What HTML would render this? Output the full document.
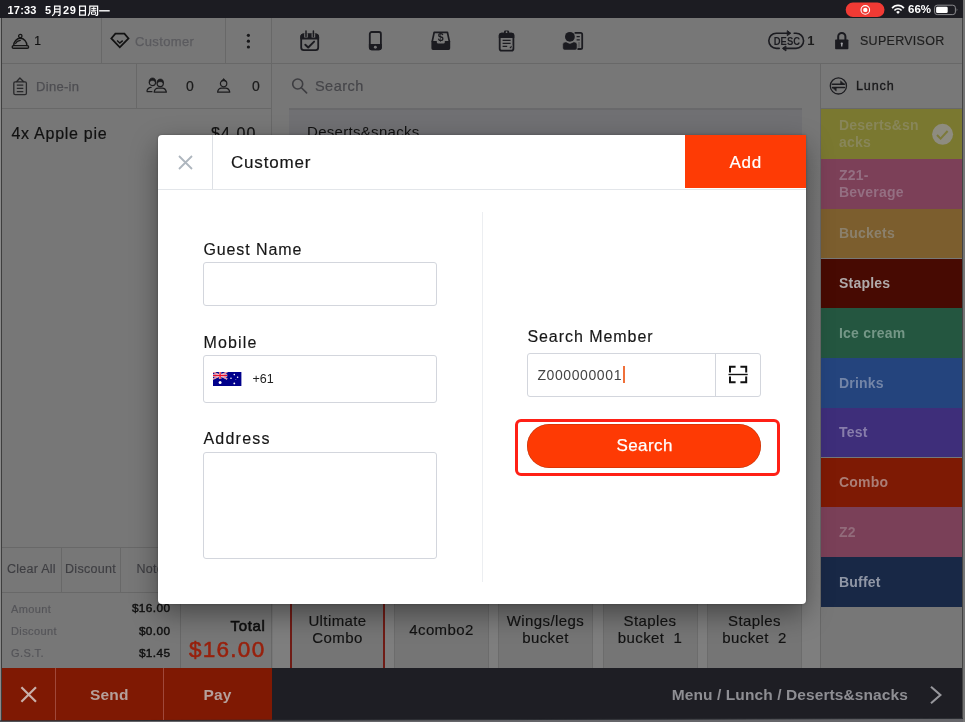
<!DOCTYPE html>
<html>
<head>
<meta charset="utf-8">
<title>POS - Customer</title>
<style>
*{box-sizing:border-box;margin:0;padding:0}
html,body{width:965px;height:722px;overflow:hidden;background:#777777;font-family:"Liberation Sans",sans-serif;}
#app{position:relative;width:965px;height:722px;overflow:hidden;background:#777777;will-change:transform;transform:translateZ(0);}
.abs{position:absolute}
.t{position:absolute;white-space:nowrap;line-height:1}
.hl{position:absolute;height:1.4px;background:#686868}
.vl{position:absolute;width:1.4px;background:#686868}
/* status bar */
#status{position:absolute;left:0;top:0;width:965px;height:18px;background:#1c1c22}
/* sidebar categories */
.cat{position:absolute;left:821px;width:141px;height:50px}
.cat .t{left:18px;font-weight:bold;font-size:14px;letter-spacing:.2px}
/* modal */
#modal{position:absolute;left:158.4px;top:135.2px;width:647.6px;height:469px;background:#fff;border-radius:4px 0 4px 4px;box-shadow:0 10px 28px -1px rgba(0,0,0,.41),0 0 2.5px rgba(0,0,0,.28)}
.lbl{position:absolute;white-space:nowrap;line-height:1;font-size:16px;color:#161616;letter-spacing:.9px;-webkit-text-stroke:.15px #161616}
.inp{position:absolute;border:1px solid #d3d6dd;border-radius:3px;background:#fff}
</style>
</head>
<body>
<div id="app">

<!-- ===== STATUS BAR ===== -->
<div id="status">
  <div class="t" style="left:7.6px;top:4.6px;font-size:11px;font-weight:bold;color:#fff;letter-spacing:.15px">17:33</div>
  <div class="t" style="left:45px;top:4.6px;font-size:11px;font-weight:bold;color:#fff">5</div>
  <div class="t" style="left:63px;top:4.6px;font-size:11px;font-weight:bold;color:#fff;letter-spacing:.7px">29</div>
  <svg class="abs" style="left:845px;top:2px" width="40" height="16"><rect x=".7" y=".6" width="38.8" height="14.4" rx="7.2" fill="#f13a34"/><circle cx="20.3" cy="7.9" r="4.3" fill="none" stroke="#fff" stroke-width="1.1"/><circle cx="20.3" cy="7.9" r="2.2" fill="#fff"/></svg>

  <svg class="abs" style="left:891px;top:4px" width="14" height="11" viewBox="0 0 14 11" fill="none" stroke="#fff" stroke-linecap="butt">
  <path d="M1.1 4.2A7.6 7.6 0 0 1 12.9 4.2" stroke-width="1.7"/><path d="M3.4 6.4A4.7 4.7 0 0 1 10.6 6.4" stroke-width="1.6"/><path d="M7 9.9L5.2 8A2.5 2.5 0 0 1 8.8 8Z" fill="#fff" stroke="none"/></svg>
  <svg class="abs" style="left:933px;top:4px" width="27" height="12" viewBox="0 0 27 12" fill="none">
  <rect x="1.6" y="1.2" width="20.8" height="9.4" rx="2.6" stroke="#8a8a8e" stroke-width="1"/><rect x="3.1" y="2.7" width="11.6" height="6.4" rx="1.3" fill="#fff"/><path d="M23.7 4.3Q25.2 5.9 23.7 7.5Z" fill="#8a8a8e"/></svg>
  <!-- CJK glyphs drawn as strokes -->
  <svg class="abs" style="left:51.2px;top:4.5px" width="60" height="12" viewBox="0 0 60 12" fill="none" stroke="#fff" stroke-width="1.25" stroke-linecap="square">
  <!-- yue -->
  <path d="M3.6 1.1H9V9.6Q9 10.6 7.6 10.4M3.6 1.1V6.4Q3.6 9.2 1.6 10.4M3.8 4H8.8M3.8 6.8H8.8"/>
  <!-- ri -->
  <path d="M28.6 1.2H34.4V10.2H28.6ZM28.8 5.6H34.2"/>
  <!-- zhou -->
  <path d="M38.8 1.2H46.6V9.6Q46.6 10.6 45.2 10.4M38.8 1.2V6.2Q38.8 9 37.4 10.4" /><path d="M40.8 3.4H44.8M42.8 2.2V5.2M40.6 5.3H45" stroke-width="1"/><path d="M41 6.9H44.6V9.3H41Z" stroke-width="1"/>
  <!-- yi -->
  <path d="M48.8 5.8H58" stroke-width="1.4"/>
  </svg>
  <div class="t" style="left:908px;top:4px;font-size:11.5px;font-weight:bold;color:#fff">66%</div>
</div>

<!-- ===== BACKGROUND APP (dimmed) ===== -->
<div class="abs" style="left:0;top:18px;width:1.1px;height:704px;background:#8a8a8a"></div><div class="abs" style="left:1.1px;top:18px;width:.9px;height:704px;background:#3e3e3e"></div>
<div class="abs" style="left:962.2px;top:18px;width:1.1px;height:704px;background:#444"></div><div class="abs" style="left:963.3px;top:0;width:1.7px;height:722px;background:#747474;z-index:5"></div>

<div class="abs" style="left:821px;top:64px;width:141px;height:44px;background:#787878"></div>
<div class="abs" style="left:272.5px;top:148px;width:548px;height:520px;background:linear-gradient(#777777,#7a7a7a 40%,#7e7e7e 85%)"></div>
<!-- grid lines -->
<div class="hl" style="left:2px;top:63px;width:960px"></div>
<div class="hl" style="left:2px;top:108px;width:269px"></div>
<div class="vl" style="left:101px;top:18px;height:45px"></div>
<div class="vl" style="left:225px;top:18px;height:45px"></div>
<div class="vl" style="left:271px;top:18px;height:650px"></div>
<div class="vl" style="left:136px;top:64px;height:44px"></div>
<div class="vl" style="left:820px;top:64px;height:604px"></div>


<!-- cloche -->
<svg class="abs" style="left:10px;top:32px" width="22" height="18" viewBox="0 0 22 18" fill="none" stroke="#161616" stroke-width="1.4" stroke-linecap="round" stroke-linejoin="round">
<rect x="2.2" y="13.6" width="16.4" height="2.6" rx="1.3"/><path d="M3.7 13.6A6.6 7.3 0 0 1 16.9 13.6"/><circle cx="10.3" cy="4.1" r="1.7" stroke-width="1.3"/><path d="M5.6 11.6Q6.6 8.8 10.4 8.4" stroke-width="1.1"/></svg>
<!-- diamond -->
<svg class="abs" style="left:110px;top:32px" width="20" height="17" viewBox="0 0 20 17" fill="none" stroke="#121212" stroke-width="1.75" stroke-linejoin="miter">
<path d="M5.4 1.6H14.4L18.5 6.4L9.8 15.3L1.3 6.4Z"/><path d="M7.1 8.6L9.8 11.1L12.7 8.6" stroke-width="1.4"/></svg>
<!-- dots -->
<svg class="abs" style="left:245px;top:32px" width="7" height="18" viewBox="0 0 7 18" fill="#18181a"><circle cx="3.4" cy="3.3" r="1.6"/><circle cx="3.4" cy="9.2" r="1.6"/><circle cx="3.4" cy="15" r="1.6"/></svg>
<!-- calendar -->
<svg class="abs" style="left:299px;top:29px" width="22" height="24" viewBox="0 0 22 24" fill="none" stroke="#1b1b20" stroke-linecap="round" stroke-linejoin="round">
<rect x="2.2" y="5.4" width="17" height="15.8" rx="2.6" stroke-width="1.8"/><path d="M2.2 9.6V8A2.6 2.6 0 0 1 4.8 5.4H16.6A2.6 2.6 0 0 1 19.2 8V9.6Z" fill="#1b1b20" stroke-width="1.8"/>
<path d="M7 4.2V8.6M14.4 4.2V8.6" stroke="#777777" stroke-width="3.6" stroke-linecap="butt"/><path d="M7 2V7.6M14.4 2V7.6" stroke-width="1.5"/>
<path d="M6.3 15.7L9.2 18.5L15.1 12.6" stroke-width="1.9"/></svg>
<!-- phone -->
<svg class="abs" style="left:367px;top:29px" width="17" height="24" viewBox="0 0 17 24" fill="none" stroke="#1b1b20">
<rect x="2.8" y="3" width="11.1" height="17.4" rx="1.9" stroke-width="1.8"/><path d="M2.8 15.8H13.9V18.5A1.9 1.9 0 0 1 12 20.4H4.7A1.9 1.9 0 0 1 2.8 18.5Z" fill="#1b1b20" stroke-width="1.8"/><circle cx="8.35" cy="18.3" r="1.45" fill="#777777" stroke="none"/></svg>
<!-- inbox $ -->
<svg class="abs" style="left:430px;top:30px" width="22" height="22" viewBox="0 0 22 22" fill="none" stroke="#1b1b20" stroke-linejoin="round">
<path d="M2.2 11.6L4.2 2.3H17.4L19.4 11.6" stroke-width="1.7"/><path d="M1.4 11.1H6.8V12.2A1.4 1.4 0 0 0 8.2 13.6H13.4A1.4 1.4 0 0 0 14.8 12.2V11.1H20.2V18.3A1.6 1.6 0 0 1 18.6 19.9H3A1.6 1.6 0 0 1 1.4 18.3Z" fill="#1b1b20" stroke="none"/>
<text x="10.8" y="11.1" text-anchor="middle" font-family="Liberation Sans, sans-serif" font-weight="bold" font-size="10.6" fill="#1b1b20" stroke="none">$</text></svg>
<!-- clipboard top -->
<svg class="abs" style="left:497px;top:29px" width="19" height="24" viewBox="0 0 19 24" fill="none" stroke="#1b1b20" stroke-linecap="round">
<rect x="2.7" y="4.6" width="13.7" height="17" rx="1.9" stroke-width="1.8"/><path d="M2.7 8.2V6.5A1.9 1.9 0 0 1 4.6 4.6H14.5A1.9 1.9 0 0 1 16.4 6.5V8.2Z" fill="#1b1b20" stroke-width="1.8"/>
<rect x="7" y="1.4" width="5.1" height="4" rx="1.2" fill="#1b1b20" stroke="none"/><circle cx="9.55" cy="3.2" r=".85" fill="#777777" stroke="none"/>
<path d="M5.6 11.4H13.6M5.6 14.4H13.6M5.6 17.4H10.2" stroke-width="1.3" stroke-linecap="butt"/><path d="M12.2 19.6C12.2 17.6 13.6 16.6 15.3 16.7C15.4 18.6 14.2 19.8 12.2 19.6Z" fill="#1b1b20" stroke="#777777" stroke-width=".7"/></svg>
<!-- person card -->
<svg class="abs" style="left:561px;top:30px" width="24" height="22" viewBox="0 0 24 22" fill="none" stroke="#1b1b20">
<path d="M13.6 2.9H19.6A1.6 1.6 0 0 1 21.2 4.5V17.4A1.6 1.6 0 0 1 19.6 19H16.4" stroke-width="1.8"/><path d="M15.6 6.6H18.8M15.6 9.9H18.8" stroke-width="1.3"/><path d="M18 12V17.6" stroke-width=".8" stroke="#3c3c40"/>
<circle cx="8.9" cy="6.8" r="5.5" fill="#777777" stroke="none"/><circle cx="8.9" cy="6.8" r="4.9" fill="#1b1b20" stroke="none"/>
<path d="M1.7 14.6A2.6 2.6 0 0 1 4.3 12H5.4A5.6 5.6 0 0 0 12.4 12H13.5A2.6 2.6 0 0 1 16.1 14.6V18.1A2 2 0 0 1 14.1 20.1H3.7A2 2 0 0 1 1.7 18.1Z" fill="#1b1b20" stroke="#777777" stroke-width=".6"/></svg>
<!-- DESC -->
<svg class="abs" style="left:767px;top:30px" width="40" height="22" viewBox="0 0 40 22" fill="none" stroke="#1b1b20" stroke-width="1.6" stroke-linecap="round" stroke-linejoin="round">
<path d="M12.2 18.4H9.4A7.6 7.6 0 0 1 9.4 3.2H22.8"/><path d="M27.2 3.2H29A7.6 7.6 0 0 1 29 18.4H16.4"/>
<path d="M20.6 .9L23.6 3.2L20.6 5.4Z" fill="#1b1b20" stroke-width="1"/><path d="M18.6 16.2L15.6 18.4L18.6 20.7Z" fill="#1b1b20" stroke-width="1"/>
<text transform="translate(19.9 14.8) scale(.835)" x="0" y="0" text-anchor="middle" font-family="Liberation Sans, sans-serif" font-weight="bold" font-size="12" fill="#1b1b20" stroke="none" textLength="31.4" lengthAdjust="spacingAndGlyphs">DESC</text></svg>
<!-- lock -->
<svg class="abs" style="left:833px;top:30px" width="18" height="22" viewBox="0 0 18 22" fill="none" stroke="#1b1b20">
<path d="M5.2 10V6.6A3.6 3.6 0 0 1 12.4 6.6V10" stroke-width="2"/><rect x="2.1" y="9.5" width="13.3" height="9.7" rx=".8" fill="#1b1b20" stroke="none"/><circle cx="8.75" cy="13.6" r="1.15" fill="#a4a4a8" stroke="none"/><path d="M8.75 13.6V16.6" stroke="#a4a4a8" stroke-width="1.3"/></svg>
<!-- clipboard dine-in -->
<svg class="abs" style="left:12px;top:76px" width="17" height="21" viewBox="0 0 17 21" fill="none" stroke="#29292b" stroke-width="1.3" stroke-linejoin="round">
<path d="M4.5 5.8H3.2A1.4 1.4 0 0 0 1.8 7.2V17.2A1.4 1.4 0 0 0 3.2 18.6H13A1.4 1.4 0 0 0 14.4 17.2V7.2A1.4 1.4 0 0 0 13 5.8H11.7"/><path d="M4.5 5.8L7.9 2L11.7 5.8Z" /><path d="M4.8 9.1H11.3M4.8 12.3H11.3M4.8 15.6H11.3"/></svg>
<!-- guests -->
<svg class="abs" style="left:145px;top:76px" width="24" height="18" viewBox="0 0 24 18" fill="none" stroke="#1c1c1e" stroke-width="1.2" stroke-linejoin="round">
<circle cx="7.4" cy="6.5" r="3.1"/><path d="M4.2 6.3C3.9 3.2 5.6 1.9 7.5 1.9C9.6 1.9 11 3.3 10.6 6.1C9.6 4.9 8.6 4.5 7.6 4.6C6.2 4.4 5 5 4.2 6.3Z" fill="#1c1c1e" stroke-width=".6"/>
<path d="M1.8 15.7C2.2 13 3.6 11.7 5.6 11.4L6.6 11.3M1.8 15.7H7.4"/>
<circle cx="15.2" cy="7.6" r="3.1" fill="#777777"/><path d="M12 7.3C11.8 4.3 13.4 3 15.3 3C17.4 3 18.8 4.4 18.4 7.2C17.4 6 16.4 5.6 15.4 5.7C14 5.5 12.8 6.1 12 7.3Z" fill="#1c1c1e" stroke-width=".6"/>
<path d="M9.2 16.2C9.6 13.4 11.2 12.2 13.2 12.2H17.2C19.2 12.2 20.8 13.4 21.4 16.2Z"/></svg>
<!-- person -->
<svg class="abs" style="left:216px;top:77px" width="16" height="17" viewBox="0 0 16 17" fill="none" stroke="#1c1c1e" stroke-width="1.2" stroke-linejoin="round">
<circle cx="7.6" cy="6.6" r="3.2"/><path d="M5.6 4.2C6.2 3 7 2.2 7.8 1.6C8.4 2.4 9.2 3.2 9.8 4.3C8.4 3.6 7 3.6 5.6 4.2Z" fill="#1c1c1e" stroke-width=".7"/>
<path d="M1.6 15.2C2 12.4 3.6 11.2 5.6 11.2H9.6C11.6 11.2 13.2 12.4 13.8 15.2Z"/></svg>
<!-- search icon -->
<svg class="abs" style="left:290px;top:77px" width="19" height="18" viewBox="0 0 19 18" fill="none" stroke="#3d3d41" stroke-width="1.6" stroke-linecap="round">
<circle cx="7.7" cy="7" r="5"/><path d="M11.4 10.7L16.6 15.9"/></svg>
<!-- swap -->
<svg class="abs" style="left:828px;top:76px" width="21" height="21" viewBox="0 0 21 21" fill="none" stroke="#1c1c20" stroke-width="1.3" stroke-linecap="round" stroke-linejoin="round">
<circle cx="10.4" cy="9.9" r="8.1"/><path d="M4.4 8.3H16.2" stroke-width="1.5"/><path d="M16.4 8.3H12.6V5.2Z" fill="#1c1c20" stroke-width=".6"/><path d="M16.4 11.6H4.6" stroke-width="1.5"/><path d="M4.4 11.6H8.2V14.7Z" fill="#1c1c20" stroke-width=".6"/></svg>

<!-- row1 texts -->
<div class="t" style="left:34.3px;top:34.6px;font-size:12px;color:#111;-webkit-text-stroke:.2px #111">1</div>
<div class="t" style="left:135px;top:35px;font-size:13px;color:#5b5b5f;letter-spacing:.35px;-webkit-text-stroke:.25px #5b5b5f">Customer</div>
<div class="t" style="left:807.3px;top:34.2px;font-size:13px;font-weight:bold;color:#1c1c1c">1</div>
<div class="t" style="left:860px;top:35px;font-size:12.5px;color:#1e1e1e;letter-spacing:.28px;-webkit-text-stroke:.15px #1e1e1e">SUPERVISOR</div>

<!-- row2 texts -->
<div class="t" style="left:36px;top:80px;font-size:13px;color:#4e4e52;letter-spacing:.3px;-webkit-text-stroke:.25px #4e4e52">Dine-in</div>
<div class="t" style="left:186px;top:79px;font-size:14px;color:#1a1a1a;-webkit-text-stroke:.2px #1a1a1a">0</div>
<div class="t" style="left:252px;top:79px;font-size:14px;color:#1a1a1a;-webkit-text-stroke:.2px #1a1a1a">0</div>
<div class="t" style="left:315px;top:79px;font-size:14.5px;color:#46464a;letter-spacing:.45px;-webkit-text-stroke:.2px #46464a">Search</div>
<div class="t" style="left:856px;top:80.4px;font-size:12.6px;color:#18181a;letter-spacing:.85px;-webkit-text-stroke:.3px #18181a">Lunch</div>

<!-- order list -->
<div class="t" style="left:11.5px;top:126.2px;font-size:16px;color:#111;letter-spacing:.72px;-webkit-text-stroke:.2px #111">4x Apple pie</div>
<div class="t" style="left:211px;top:126.2px;font-size:16px;color:#111;letter-spacing:1.1px;-webkit-text-stroke:.2px #111">$4.00</div>

<!-- menu header -->
<div class="abs" style="left:289px;top:108px;width:513px;height:40px;background:#707073;border-top:2px solid #69696b"></div>
<div class="t" style="left:307px;top:124px;font-size:15px;color:#111;letter-spacing:.3px">Deserts&amp;snacks</div>

<!-- sidebar -->
<div class="hl" style="left:821px;top:108px;width:141px"></div>
<div id="cats">
<div class="cat" style="top:108.8px;height:49.9px;background:#7a7830"><div class="t" style="top:8.6px;line-height:16.5px;color:#88865a">Deserts&amp;sn<br>acks</div></div>
<div class="cat" style="top:158.7px;height:49.9px;background:#7c4058"><div class="t" style="top:8.6px;line-height:16.5px;color:#946f82">Z21-<br>Beverage</div></div>
<div class="cat" style="top:208.6px;height:49.9px;background:#7c5e2e"><div class="t" style="top:17.8px;color:#8b806c">Buckets</div></div>
<div class="cat" style="top:258.5px;height:49.8px;background:#470a02"><div class="t" style="top:17.7px;color:#b0aaaa">Staples</div></div>
<div class="cat" style="top:308.3px;height:49.7px;background:#245640"><div class="t" style="top:17.6px;color:#759787">Ice cream</div></div>
<div class="cat" style="top:358.0px;height:49.9px;background:#24447d"><div class="t" style="top:17.7px;color:#7385a7">Drinks</div></div>
<div class="cat" style="top:407.9px;height:49.6px;background:#3e2e7a"><div class="t" style="top:17.6px;color:#887dab">Test</div></div>
<div class="cat" style="top:457.5px;height:49.9px;background:#7e1a04"><div class="t" style="top:17.7px;color:#ab7e76">Combo</div></div>
<div class="cat" style="top:507.4px;height:49.6px;background:#7a4058"><div class="t" style="top:17.6px;color:#926b7b">Z2</div></div>
<div class="cat" style="top:557.0px;height:49.8px;background:#182846"><div class="t" style="top:17.7px;color:#9097a6">Buffet</div></div>
<svg class="abs" style="left:931px;top:122.5px" width="23" height="23" viewBox="0 0 23 23"><circle cx="11.6" cy="11.3" r="10.5" fill="#8e8c80"/><path d="M6 12L9.6 15.6L16.6 8" fill="none" stroke="#7c7a3a" stroke-width="2"/></svg>
</div>

<!-- bottom-left totals -->
<div id="bl">
<div class="hl" style="left:2px;top:547px;width:269px"></div>
<div class="hl" style="left:2px;top:592px;width:269px"></div>
<div class="vl" style="left:61px;top:548px;height:44px"></div>
<div class="vl" style="left:120px;top:548px;height:44px"></div>
<div class="vl" style="left:180px;top:593px;height:75px"></div>
<div class="t" style="left:7px;top:563px;font-size:12.5px;color:#3e3e42;-webkit-text-stroke:.15px #3e3e42;letter-spacing:.25px">Clear All</div>
<div class="t" style="left:65px;top:563px;font-size:12.5px;color:#3e3e42;-webkit-text-stroke:.15px #3e3e42;letter-spacing:.3px">Discount</div>
<div class="t" style="left:136.5px;top:563px;font-size:12.5px;color:#3e3e42;-webkit-text-stroke:.15px #3e3e42;letter-spacing:.3px">Note</div>
<div class="t" style="left:11px;top:603.6px;font-size:11px;color:#545458;letter-spacing:.4px;-webkit-text-stroke:.15px #545458">Amount</div>
<div class="t" style="left:11px;top:625.8px;font-size:11px;color:#545458;letter-spacing:.4px;-webkit-text-stroke:.15px #545458">Discount</div>
<div class="t" style="left:11px;top:648.0px;font-size:11px;color:#545458;letter-spacing:.4px;-webkit-text-stroke:.15px #545458">G.S.T.</div>
<div class="t" style="right:794.5px;top:603.3px;font-size:11.8px;color:#111;letter-spacing:.42px;-webkit-text-stroke:.45px #111">$16.00</div>
<div class="t" style="right:794.5px;top:625.5px;font-size:11.8px;color:#111;letter-spacing:.42px;-webkit-text-stroke:.45px #111">$0.00</div>
<div class="t" style="right:794.5px;top:647.7px;font-size:11.8px;color:#111;letter-spacing:.42px;-webkit-text-stroke:.45px #111">$1.45</div>
<div class="t" style="right:699.5px;top:617.5px;font-size:15px;color:#0e0e0e;letter-spacing:.65px;-webkit-text-stroke:.6px #0e0e0e">Total</div>
<div class="t" style="right:699.5px;top:638.5px;font-size:22.5px;color:#98210d;letter-spacing:1.3px;-webkit-text-stroke:.55px #98210d">$16.00</div>
</div>

<!-- menu items -->
<div id="items">
<div class="abs" style="left:290.0px;top:596px;width:95px;height:72px;background:#757575;border-left:2.6px solid #701c16;border-right:2.6px solid #701c16;"></div><div class="abs" style="left:290.0px;top:612px;width:95px;text-align:center;font-size:15px;line-height:17.4px;color:#121212;letter-spacing:.4px;white-space:nowrap;-webkit-text-stroke:.15px #121212">Ultimate<br>Combo</div>
<div class="abs" style="left:394.0px;top:596px;width:95px;height:72px;background:#757575;border-left:1px solid #6c6c6c;border-right:1px solid #6c6c6c;"></div><div class="abs" style="left:394.0px;top:621px;width:95px;text-align:center;font-size:15px;line-height:17.4px;color:#121212;letter-spacing:.4px;white-space:nowrap;-webkit-text-stroke:.15px #121212">4combo2</div>
<div class="abs" style="left:498.0px;top:596px;width:95px;height:72px;background:#757575;border-left:1px solid #6c6c6c;border-right:1px solid #6c6c6c;"></div><div class="abs" style="left:498.0px;top:612px;width:95px;text-align:center;font-size:15px;line-height:17.4px;color:#121212;letter-spacing:.4px;white-space:nowrap;-webkit-text-stroke:.15px #121212">Wings/legs<br>bucket</div>
<div class="abs" style="left:602.5px;top:596px;width:95px;height:72px;background:#757575;border-left:1px solid #6c6c6c;border-right:1px solid #6c6c6c;"></div><div class="abs" style="left:602.5px;top:612px;width:95px;text-align:center;font-size:15px;line-height:17.4px;color:#121212;letter-spacing:.4px;white-space:nowrap;-webkit-text-stroke:.15px #121212">Staples<br>bucket&nbsp; 1</div>
<div class="abs" style="left:707.0px;top:596px;width:95px;height:72px;background:#757575;border-left:1px solid #6c6c6c;border-right:1px solid #6c6c6c;"></div><div class="abs" style="left:707.0px;top:612px;width:95px;text-align:center;font-size:15px;line-height:17.4px;color:#121212;letter-spacing:.4px;white-space:nowrap;-webkit-text-stroke:.15px #121212">Staples<br>bucket&nbsp; 2</div>
</div>

<!-- bottom bar -->
<div id="bottom">
<div class="abs" style="left:2px;top:667.5px;width:269.5px;height:54.5px;background:#7f1903"></div>
<div class="abs" style="left:55px;top:667.5px;width:1px;height:52.5px;background:#a0483a"></div>
<div class="abs" style="left:162.5px;top:667.5px;width:1px;height:52.5px;background:#a0483a"></div>
<div class="abs" style="left:271.5px;top:667.5px;width:690.7px;height:54.5px;background:#1e1e24"></div>
<svg class="abs" style="left:0;top:716px" width="965" height="6"><path d="M0 4.9L963.3 2.4V6H0Z" fill="#66666a"/><path d="M0 4.9L963.3 2.4" stroke="#2c2e33" stroke-width="1" fill="none"/></svg>
<svg class="abs" style="left:20px;top:685.5px" width="17" height="17" viewBox="0 0 17 17"><path d="M1.4 1.2L16 15.8M16 1.2L1.4 15.8" stroke="#c9b0aa" stroke-width="2.2" fill="none"/></svg>
<div class="t" style="left:90px;top:686.5px;font-size:15.5px;font-weight:bold;color:#b5a09b;letter-spacing:.2px">Send</div>
<div class="t" style="left:203.5px;top:686.5px;font-size:15.5px;font-weight:bold;color:#b5a09b;letter-spacing:.2px">Pay</div>
<div class="t" style="right:57px;top:686.5px;font-size:15.5px;font-weight:bold;color:#8e8e93;letter-spacing:.1px">Menu / Lunch / Deserts&amp;snacks</div>
<svg class="abs" style="left:929px;top:685px" width="14" height="20" viewBox="0 0 14 20"><path d="M2 1.8L11.4 10L2 18.2" stroke="#97979c" stroke-width="2.1" fill="none"/></svg>
</div>

<!-- ===== MODAL ===== -->
<div id="modal">
  <div class="abs" style="left:0;top:53.6px;width:648px;height:1.2px;background:#e3e6ea"></div>
  <div class="abs" style="left:53.6px;top:0;width:1.2px;height:54px;background:#dde0e5"></div>
  <svg class="abs" style="left:20px;top:20px" width="15" height="15" viewBox="0 0 15 15"><path d="M1 1L14 14M14 1L1 14" stroke="#aeb6be" stroke-width="1.8" fill="none"/></svg>
  <div class="t" style="left:72.5px;top:19px;font-size:17px;color:#161616;letter-spacing:.85px;-webkit-text-stroke:.18px #161616">Customer</div>
  <div class="abs" style="left:526.6px;top:0;width:121px;height:53.3px;background:#fe3b05"></div>
  <div class="t" style="left:571px;top:19px;font-size:17px;color:#fff;letter-spacing:.75px;-webkit-text-stroke:.2px #fff">Add</div>

  <div class="lbl" style="left:45px;top:106.4px">Guest Name</div>
  <div class="inp" style="left:45px;top:127px;width:234px;height:44px"></div>
  <div class="lbl" style="left:45px;top:199.8px;letter-spacing:1.2px">Mobile</div>
  <div class="inp" style="left:45px;top:220px;width:234px;height:48px"></div>
  <svg class="abs" style="left:54.8px;top:237.2px" width="28.4" height="14" viewBox="0 0 28.4 14">
<rect width="28.4" height="14" fill="#00008b"/>
<g><path d="M0 0L14.2 7M14.2 0L0 7" stroke="#fff" stroke-width="1.5"/><path d="M0 0L14.2 7M14.2 0L0 7" stroke="#e8112d" stroke-width=".6"/>
<path d="M7.1 0V7M0 3.5H14.2" stroke="#fff" stroke-width="2.4"/><path d="M7.1 0V7M0 3.5H14.2" stroke="#e8112d" stroke-width="1.3"/></g>
<circle cx="7.1" cy="10.6" r="1.5" fill="#fff"/><circle cx="21.3" cy="2.6" r=".8" fill="#fff"/><circle cx="18" cy="6.3" r=".8" fill="#fff"/><circle cx="24.6" cy="5.3" r=".8" fill="#fff"/><circle cx="21.3" cy="11.4" r=".9" fill="#fff"/><circle cx="22.9" cy="7.6" r=".45" fill="#fff"/>
</svg>
  <div class="t" style="left:94px;top:238px;font-size:12.5px;color:#222">+61</div>
  <div class="lbl" style="left:45px;top:296.2px;letter-spacing:1.25px">Address</div>
  <div class="inp" style="left:45px;top:317px;width:234px;height:107px"></div>

  <div class="abs" style="left:323.5px;top:77px;width:1.5px;height:370px;background:#eceef1"></div>

  <div class="lbl" style="left:369px;top:194px;letter-spacing:.95px">Search Member</div>
  <div class="inp" style="left:369px;top:218px;width:234px;height:44px"></div>
  <div class="abs" style="left:557px;top:218px;width:1px;height:44px;background:#d3d6dd"></div>
  <svg class="abs" style="left:569px;top:229px" width="22" height="21" viewBox="0 0 22 21" fill="none" stroke="#111" stroke-width="2">
<path d="M3 8.4V2.7H8.6M13.4 2.7H19.2V8.4M19.2 12.6V18.2H13.4M8.6 18.2H3V12.6"/><path d="M1.5 10.5H20.7" stroke-width="1.4"/></svg>
  <div class="t" style="left:379px;top:233px;font-size:14px;color:#444;letter-spacing:.6px">Z000000001</div>
  <div class="abs" style="left:465px;top:231px;width:1.3px;height:17px;background:#f0703a"></div>

  <div class="abs" style="left:369px;top:289px;width:234px;height:44px;border-radius:22px;background:#fe3a04;box-shadow:inset 0 0 0 .5px rgba(120,40,10,.5)"></div>
  <div class="t" style="left:458px;top:302px;font-size:17px;color:#fff;letter-spacing:.45px;-webkit-text-stroke:.25px #fff">Search</div>
  <div class="abs" style="left:356.2px;top:284.1px;width:265.2px;height:57.2px;border:3.8px solid #ff2016;border-radius:6px"></div>
</div>

</div>
</body>
</html>
